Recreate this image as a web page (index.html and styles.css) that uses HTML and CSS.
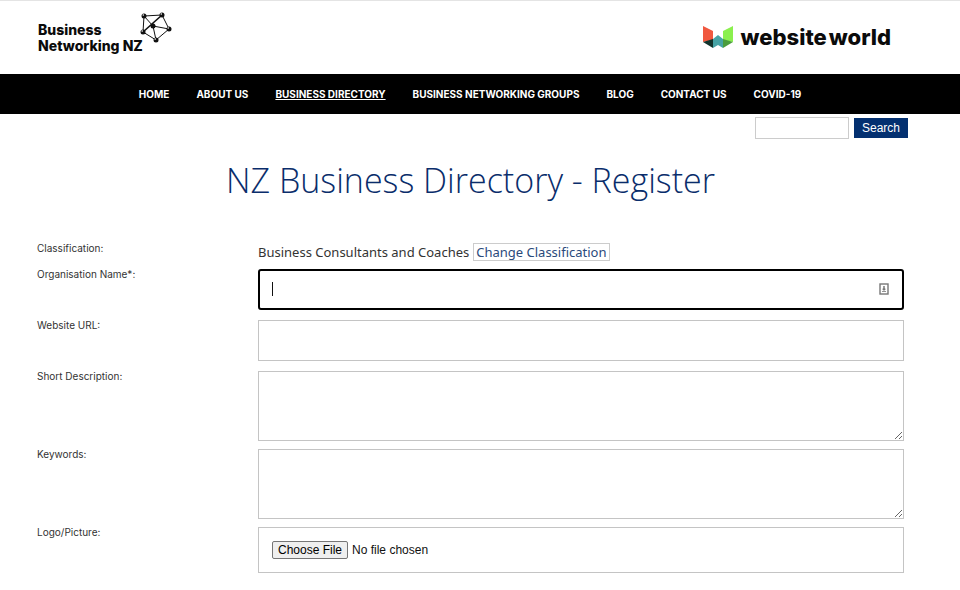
FILE: index.html
```html
<!DOCTYPE html>
<html lang="en">
<head>
<meta charset="utf-8">
<meta name="viewport" content="width=device-width, initial-scale=1">
<title>NZ Business Directory - Register</title>
<link rel="stylesheet" href="styles.css">
</head>
<body>
<header class="masthead">
  <a class="brand" href="#">
    <span class="brand-name"><span>Business</span><span>Networking NZ</span></span>
    <svg class="brand-mark" viewBox="0 0 32 32" width="32" height="32" aria-hidden="true">
      <path d="M4 4 22 3 29 17 16 28 3 20ZM4 4 13 14 29 17M13 14 16 28" fill="none" stroke="#111" stroke-width="1"/>
      <path d="M22 3 3 20" stroke="#111" stroke-width="1.6"/>
      <g fill="#111"><circle cx="4" cy="4" r="2.5"/><circle cx="22" cy="3" r="2.5"/><circle cx="29" cy="17" r="2.5"/><circle cx="16" cy="28" r="2.5"/><circle cx="3" cy="20" r="2.5"/><circle cx="13" cy="14" r="2.5"/></g>
      <g fill="#fff"><circle cx="3.3" cy="3" r=".8"/><circle cx="21.3" cy="2" r=".8"/><circle cx="28.2" cy="16" r=".8"/><circle cx="15.2" cy="27" r=".8"/><circle cx="2.2" cy="19" r=".8"/></g>
    </svg>
  </a>
  <a class="partner" href="#">
    <svg viewBox="0 0 30 23" width="30" height="23" aria-hidden="true">
      <path d="M0 0 10 5V14L0 16Z" fill="#f0583f"/>
      <path d="M30 0 20 5V14L30 16Z" fill="#8bf04e"/>
      <path d="M0 16 10 13V22Z" fill="#12332c"/>
      <path d="M30 16 20 13V22Z" fill="#4a9c3c"/>
      <path d="M10 13 15 9 20 13V22L15 19 10 22Z" fill="#45a3a5"/>
    </svg>
    <span class="partner-name"><span>website</span> <span>world</span></span>
  </a>
</header>
<nav class="nav">
  <a href="#">HOME</a>
  <a href="#">ABOUT US</a>
  <a href="#" class="current">BUSINESS DIRECTORY</a>
  <a href="#">BUSINESS NETWORKING GROUPS</a>
  <a href="#">BLOG</a>
  <a href="#">CONTACT US</a>
  <a href="#">COVID-19</a>
</nav>
<form class="search">
  <input type="search" aria-label="Search">
  <button type="submit">Search</button>
</form>
<main>
  <h1>NZ Business Directory - Register</h1>
  <form class="register">
    <span class="label">Classification:</span>
    <div class="classification">
      <span>Business Consultants and Coaches</span>
      <a href="#">Change Classification</a>
    </div>
    <label class="label" for="org">Organisation Name*:</label>
    <div class="active-field">
      <input class="field" id="org" type="text">
      <span class="caret"></span>
      <svg class="autofill" viewBox="0 0 10 12" width="10" height="12" aria-hidden="true">
        <rect x="1" y="1" width="8" height="10" fill="#fff" stroke="#777" stroke-width="1.4"/>
        <circle cx="5" cy="4" r="1" fill="#777"/>
        <path d="M4 5.5H6V7H4ZM3 8.5H7" fill="#777" stroke="#777" stroke-width=".8"/>
      </svg>
    </div>
    <label class="label" for="url">Website URL:</label>
    <input class="field" id="url" type="url">
    <label class="label" for="desc">Short Description:</label>
    <textarea class="field" id="desc"></textarea>
    <label class="label" for="keys">Keywords:</label>
    <textarea class="field" id="keys"></textarea>
    <label class="label" for="logo">Logo/Picture:</label>
    <input class="field" id="logo" type="file">
  </form>
</main>
</body>
</html>
```
FILE: styles.css
```css
* { box-sizing: border-box; }
body {
  margin: 0;
  background: #fff;
  color: #333;
  border-top: 1px solid #e4e4e4;
  font-family: "Inter", "Liberation Sans", sans-serif;
}
.masthead {
  display: flex;
  justify-content: space-between;
  align-items: flex-start;
  height: 73px;
  padding: 11px 69px 0 38px;
}
.masthead a { color: #0b0b0b; text-decoration: none; }
.brand { display: flex; }
.brand-name {
  display: flex;
  flex-direction: column;
  padding-top: 10px;
  font-size: 14px;
  line-height: 16px;
  font-weight: 800;
}
.brand-mark { margin-left: -3px; }
.partner {
  display: flex;
  align-items: center;
  gap: 8px;
  padding-top: 13px;
  font-size: 22px;
  line-height: 24px;
  font-weight: 800;
}
.partner-name {
  display: flex;
  gap: 2px;
}
.nav {
  display: flex;
  justify-content: center;
  align-items: center;
  gap: 27px;
  height: 40px;
  padding-right: 20px;
  background: #000;
}
.nav a {
  color: #fff;
  font-size: 10px;
  font-weight: 700;
  text-decoration: none;
}
.nav .current { text-decoration: underline; }
.search {
  display: flex;
  justify-content: flex-end;
  align-items: center;
  gap: 5px;
  padding: 3px 52px 0 0;
}
.search input {
  width: 94px;
  height: 22px;
  border: 1px solid #ccc;
}
.search button {
  height: 20px;
  padding: 0 8px;
  border: 0;
  background: #033070;
  color: #fff;
  font: 12px/18px "Liberation Sans", sans-serif;
}
main { padding: 18px 56px 16px 37px; }
h1 {
  margin: 0 20px 39px 0;
  padding-left: 20px;
  color: #0a2d6b;
  font-family: "Open Sans", sans-serif;
  font-size: 34px;
  line-height: 46px;
  font-weight: 300;
  text-align: center;
}
.register {
  display: grid;
  grid-template-columns: 221px 1fr;
  row-gap: 8px;
}
.label {
  font-size: 10px;
  line-height: 10px;
}
.register > .label:first-child { line-height: 12px; }
.classification {
  display: flex;
  align-items: center;
  gap: 4px;
  height: 19px;
  font-family: "Noto Sans", sans-serif;
  font-size: 13px;
}
.classification a {
  padding: 0 2px;
  border: 1px solid #ccc;
  color: #2a4a7c;
  line-height: 16px;
  text-decoration: none;
}
.field {
  display: block;
  width: 100%;
  height: 41px;
  margin: 0 0 2px;
  padding: 12px;
  border: 1px solid #c4c4c4;
  background: #fff;
  color: #111;
  font: 12px/16px "Liberation Sans", sans-serif;
}
textarea.field {
  height: 70px;
  margin: 0;
}
.field[type="file"] {
  height: 46px;
  padding: 13px;
}
.field::file-selector-button {
  height: 18px;
  margin: 0 4px 0 0;
  padding: 0 5px;
  border: 1px solid #767676;
  border-radius: 2px;
  background: #efefef;
  font: inherit;
}
.active-field { position: relative; }
.active-field .field {
  border: 2px solid #000;
  border-radius: 3px;
}
.caret {
  position: absolute;
  top: 13px;
  left: 14px;
  width: 1px;
  height: 14px;
  background: #111;
}
.autofill {
  position: absolute;
  top: 14px;
  right: 15px;
}
```
